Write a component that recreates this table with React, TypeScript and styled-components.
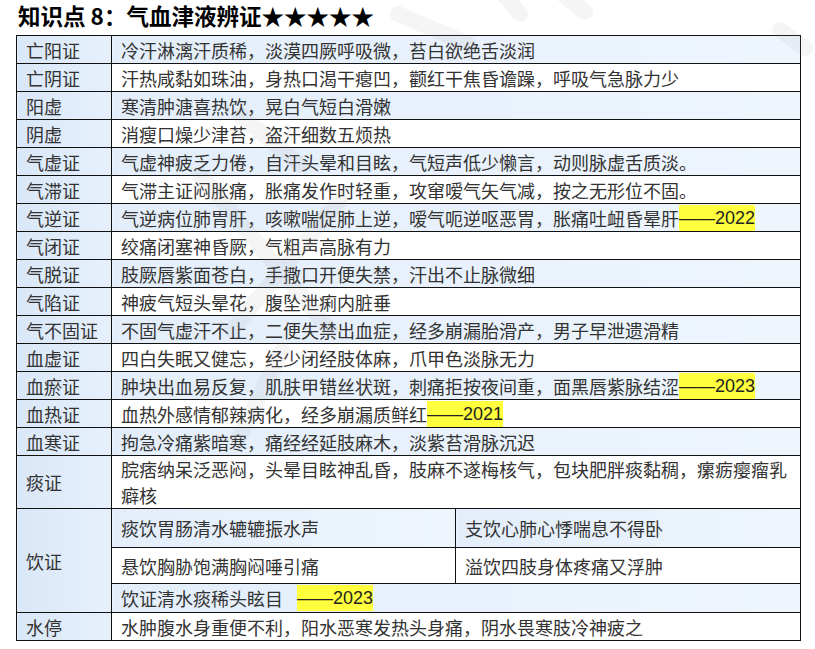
import React from 'react';
import styled, { createGlobalStyle } from 'styled-components';

// 기본 페이지 스타일
const GlobalStyle = createGlobalStyle`
  html, body {
    margin: 0;
    padding: 0;
    background: #fff;
  }
  body {
    font-family: "Noto Sans CJK SC", "Noto Sans", sans-serif;
  }
`;

type Row = { label: string; text: string; year?: string };

const rows: Row[] = [
  { label: '亡阳证', text: '冷汗淋漓汗质稀，淡漠四厥呼吸微，苔白欲绝舌淡润' },
  { label: '亡阴证', text: '汗热咸黏如珠油，身热口渴干瘪凹，颧红干焦昏谵躁，呼吸气急脉力少' },
  { label: '阳虚', text: '寒清肿溏喜热饮，晃白气短白滑嫩' },
  { label: '阴虚', text: '消瘦口燥少津苔，盗汗细数五烦热' },
  { label: '气虚证', text: '气虚神疲乏力倦，自汗头晕和目眩，气短声低少懒言，动则脉虚舌质淡。' },
  { label: '气滞证', text: '气滞主证闷胀痛，胀痛发作时轻重，攻窜嗳气矢气减，按之无形位不固。' },
  { label: '气逆证', text: '气逆病位肺胃肝，咳嗽喘促肺上逆，嗳气呃逆呕恶胃，胀痛吐衄昏晕肝', year: '2022' },
  { label: '气闭证', text: '绞痛闭塞神昏厥，气粗声高脉有力' },
  { label: '气脱证', text: '肢厥唇紫面苍白，手撒口开便失禁，汗出不止脉微细' },
  { label: '气陷证', text: '神疲气短头晕花，腹坠泄痢内脏垂' },
  { label: '气不固证', text: '不固气虚汗不止，二便失禁出血症，经多崩漏胎滑产，男子早泄遗滑精' },
  { label: '血虚证', text: '四白失眠又健忘，经少闭经肢体麻，爪甲色淡脉无力' },
  { label: '血瘀证', text: '肿块出血易反复，肌肤甲错丝状斑，刺痛拒按夜间重，面黑唇紫脉结涩', year: '2023' },
  { label: '血热证', text: '血热外感情郁辣病化，经多崩漏质鲜红', year: '2021' },
  { label: '血寒证', text: '拘急冷痛紫暗寒，痛经经延肢麻木，淡紫苔滑脉沉迟' },
  { label: '痰证', text: '脘痞纳呆泛恶闷，头晕目眩神乱昏，肢麻不遂梅核气，包块肥胖痰黏稠，瘰疬瘿瘤乳癖核' },
];

const App: React.FC = () => {
  return (
    <Page>
      <GlobalStyle />
      <Title>知识点 8：气血津液辨证★★★★★</Title>

      <Table>
        <colgroup>
          <col style={{ width: 95 }} />
          <col style={{ width: 344 }} />
          <col style={{ width: 345 }} />
        </colgroup>
        <tbody>
          {rows.map((r, i) => (
            <tr key={r.label}>
              <LabelCell>{r.label}</LabelCell>
              <TextCell colSpan={2} $shaded={i % 2 === 0}>
                {r.text}
                {r.year && <Mark>——{r.year}</Mark>}
              </TextCell>
            </tr>
          ))}

          {/* 饮证 */}
          <tr>
            <LabelCell rowSpan={3}>饮证</LabelCell>
            <TextCell $shaded $h={38}>痰饮胃肠清水辘辘振水声</TextCell>
            <TextCell $shaded $h={38}>支饮心肺心悸喘息不得卧</TextCell>
          </tr>
          <tr>
            <TextCell $h={35}>悬饮胸胁饱满胸闷唾引痛</TextCell>
            <TextCell $h={35}>溢饮四肢身体疼痛又浮肿</TextCell>
          </tr>
          <tr>
            <TextCell colSpan={2} $shaded $h={28}>
              饮证清水痰稀头眩目<Mark $gap={14}>——2023</Mark>
            </TextCell>
          </tr>

          <tr>
            <LabelCell>水停</LabelCell>
            <TextCell colSpan={2}>水肿腹水身重便不利，阳水恶寒发热头身痛，阴水畏寒肢冷神疲之</TextCell>
          </tr>
        </tbody>
      </Table>

      {/* 워터마크 */}
      <Watermark viewBox="0 0 815 649" width="815" height="649">
        <g stroke="#9a9a9a" strokeWidth="16" strokeLinecap="round" fill="none">
          <line x1="398" y1="14" x2="468" y2="44" />
          <line x1="505" y1="-4" x2="520" y2="14" />
          <line x1="565" y1="-4" x2="585" y2="12" />
          <line x1="780" y1="30" x2="805" y2="48" />
          <line x1="200" y1="175" x2="330" y2="330" />
          <line x1="340" y1="200" x2="232" y2="330" />
          <line x1="282" y1="350" x2="238" y2="440" />
          <line x1="240" y1="115" x2="300" y2="165" />
        </g>
      </Watermark>
    </Page>
  );
};

// 스타일 정의

const Page = styled.div`
  position: relative;
  width: 815px;
  height: 649px;
  padding-left: 16px;
  box-sizing: border-box;
  overflow: hidden;
`;

const Title = styled.h1`
  margin: 0;
  padding-left: 2px;
  height: 35px;
  font-size: 22.5px;
  line-height: 31px;
  font-weight: 700;
  color: #000;
`;

const Table = styled.table`
  border-collapse: collapse;
  table-layout: fixed;
  width: 784px;
  font-size: 18px;
  color: #333;

  td {
    border: 1px solid #111;
  }
`;

const LabelCell = styled.td`
  height: 27px;
  padding: 0 0 0 9px;
  line-height: 26px;
  white-space: nowrap;
  background: linear-gradient(to right, #d9e7f7, #e6f0fb);
`;

const TextCell = styled.td<{ $shaded?: boolean; $h?: number }>`
  height: ${(p) => p.$h ?? 27}px;
  padding: 0 6px 0 9px;
  line-height: 26px;
  background: ${(p) =>
    p.$shaded ? 'linear-gradient(to right, #e3eefa, #eef5fd)' : '#fff'};
`;

const Mark = styled.span<{ $gap?: number }>`
  display: inline-block;
  margin-left: ${(p) => p.$gap ?? 0}px;
  height: 26px;
  line-height: 26px;
  vertical-align: top;
  font-family: "Liberation Sans", Arial, sans-serif;
  background: #ffff3d;
  color: #222;
`;

const Watermark = styled.svg`
  position: absolute;
  top: 0;
  left: 0;
  opacity: 0.09;
  pointer-events: none;
`;

export default App;
